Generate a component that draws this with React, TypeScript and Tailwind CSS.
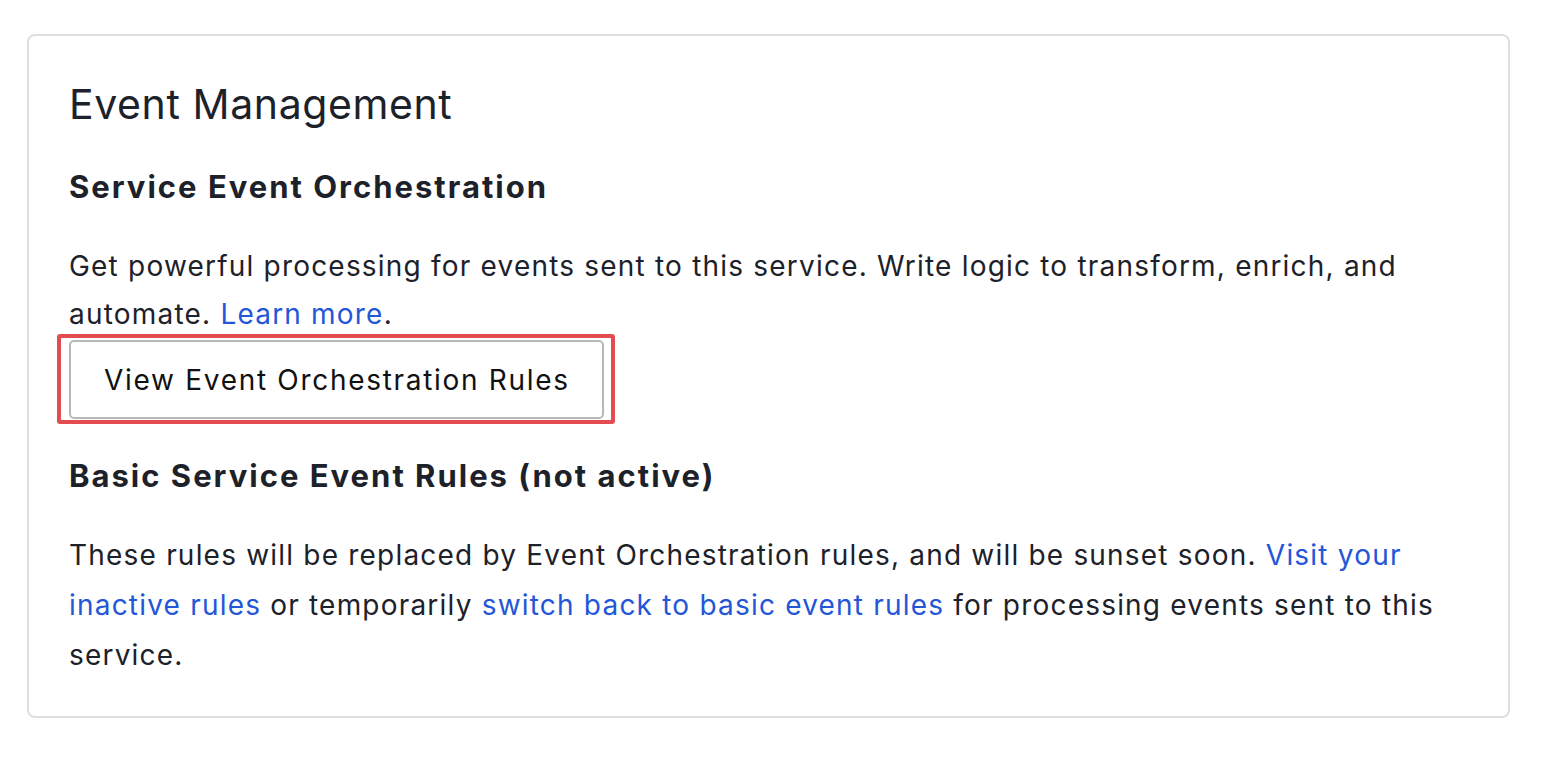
import { FC } from 'react';

const Link: FC<{ children: string }> = ({ children }) => (
  <a href="#" className="text-[#2456d8] no-underline">
    {children}
  </a>
);

const App: FC = () => {
  return (
    <div className="min-h-[758px] bg-white pt-[34px] pl-[27px] pr-[50px] font-['Inter','Noto_Sans',sans-serif] text-[#1d2129]">
      <section className="rounded-lg border-2 border-[#dfdfdf] pl-[40px] pr-[36px] pt-[42px] pb-[36px]">
        <h2 className="text-[41px] leading-[52px] font-normal tracking-[0.6px]">Event Management</h2>

        <h3 className="mt-[37px] text-[31px] leading-[40px] font-bold tracking-[2px]">Service Event Orchestration</h3>
        <p className="mt-[35px] text-[28px] leading-[48px] tracking-[1.2px]">
          Get powerful processing for events sent to this service. Write logic to transform, enrich, and automate.{' '}
          <Link>Learn more</Link>.
        </p>

        {/* highlighted button */}
        <div className="ml-[-12px] mt-[-4px] w-fit rounded-[3px] border-4 border-[#e34c51] pl-[8px] pr-[7px] pt-[2px] pb-[1px]">
          <button className="h-[79px] rounded-[5px] border-2 border-[#b8b8b8] bg-white pl-[33px] pr-[32px] text-[28px] tracking-[1.7px] text-[#111]">
            View Event Orchestration Rules
          </button>
        </div>

        <h3 className="mt-[32px] text-[31px] leading-[40px] font-bold tracking-[2px]">
          Basic Service Event Rules (not active)
        </h3>
        <p className="mt-[34px] text-[28px] leading-[50px] tracking-[1.2px]">
          These rules will be replaced by Event Orchestration rules, and will be sunset soon.{' '}
          <Link>Visit your inactive rules</Link> or temporarily <Link>switch back to basic event rules</Link> for
          processing events sent to this service.
        </p>
      </section>
    </div>
  );
};

export default App;
